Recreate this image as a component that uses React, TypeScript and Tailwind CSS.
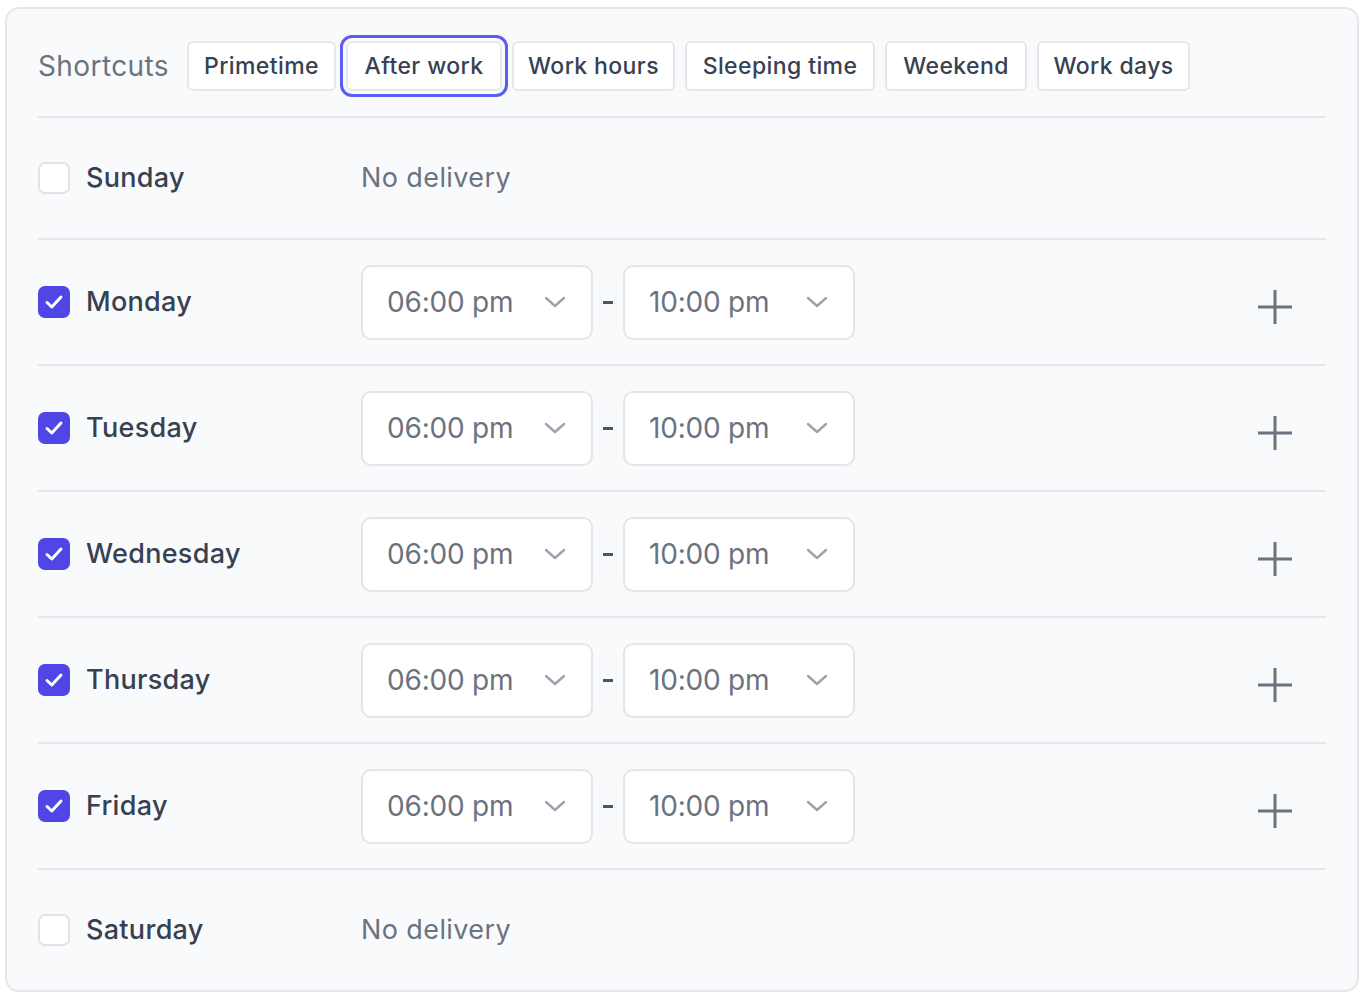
import React from "react";

const shortcuts: { label: string; w: string; active?: boolean }[] = [
  { label: "Primetime", w: "w-[149px]" },
  { label: "After work", w: "w-[156px]", active: true },
  { label: "Work hours", w: "w-[163px]" },
  { label: "Sleeping time", w: "w-[190px]" },
  { label: "Weekend", w: "w-[142px]" },
  { label: "Work days", w: "w-[153px]" },
];

const days: { name: string; on: boolean }[] = [
  { name: "Sunday", on: false },
  { name: "Monday", on: true },
  { name: "Tuesday", on: true },
  { name: "Wednesday", on: true },
  { name: "Thursday", on: true },
  { name: "Friday", on: true },
  { name: "Saturday", on: false },
];

function Checkbox({ on }: { on: boolean }) {
  if (on) {
    return (
      <div className="w-[32px] h-[32px] rounded-[7px] bg-[#4f46e5] flex items-center justify-center shrink-0">
        <svg width="32" height="32" viewBox="0 0 32 32" fill="none">
          <path d="M9 16.5 L13.8 21 L23 11" stroke="white" strokeWidth="3" strokeLinecap="round" strokeLinejoin="round" />
        </svg>
      </div>
    );
  }
  return <div className="w-[32px] h-[32px] rounded-[7px] bg-white border-2 border-[#e1e3e8] shrink-0" />;
}

function Chevron() {
  return (
    <svg width="22" height="12" viewBox="0 0 22 12" fill="none">
      <path d="M2 2 L11 10 L20 2" stroke="#9ca3af" strokeWidth="2.4" strokeLinecap="round" strokeLinejoin="round" />
    </svg>
  );
}

function TimeSelect({ value }: { value: string }) {
  return (
    <div className="w-[232px] h-[75px] rounded-[10px] border-2 border-[#e3e5e9] bg-white flex items-center justify-between pl-[24px] pr-[25px]">
      <span className="text-[28px] text-[#6b7280] tracking-[-0.2px]">{value}</span>
      <Chevron />
    </div>
  );
}

function PlusIcon() {
  return (
    <svg width="38" height="38" viewBox="0 0 38 38" fill="none">
      <path d="M19 2 V36 M2 19 H36" stroke="#6b7280" strokeWidth="3" />
    </svg>
  );
}

export default function App() {
  return (
    <div className="min-h-screen bg-white pl-[5px] pt-[7px] font-['Inter',sans-serif]">
      <div className="w-[1354px] rounded-[14px] border-2 border-[#e5e7eb] bg-[#f9fafb] px-[31px] pt-[32px]">
        <div className="flex items-center h-[50px]">
          <span className="w-[149px] shrink-0 text-[28px] tracking-[0.4px] text-[#6b7280]">Shortcuts</span>
          <div className="flex gap-[10px]">
            {shortcuts.map((s) => (
              <button
                key={s.label}
                className={`${s.w} h-[50px] rounded-[6px] border-2 border-[#e5e7eb] bg-white text-[23px] tracking-[0.4px] font-medium text-[#374151] flex items-center justify-center ${
                  s.active ? "outline-[3.5px] outline-offset-[3px] outline-[#5b5cf0]" : ""
                }`}
              >
                {s.label}
              </button>
            ))}
          </div>
        </div>
        <div className="mt-[25px]">
          {days.map((d) => (
            <div
              key={d.name}
              className={`flex items-center border-t-2 border-[#e5e7eb] ${d.on ? "h-[126px]" : "h-[122px]"}`}
            >
              <div className="w-[323px] flex items-center gap-[16px]">
                <Checkbox on={d.on} />
                <span className="text-[27px] tracking-[0.3px] font-medium text-[#374151]">{d.name}</span>
              </div>
              {d.on ? (
                <>
                  <TimeSelect value="06:00 pm" />
                  <div className="w-[30px] flex justify-center">
                    <div className="w-[10px] h-[3px] bg-[#4b5563]" />
                  </div>
                  <TimeSelect value="10:00 pm" />
                  <div className="flex-1" />
                  <div className="mr-[32px] mt-[10px]">
                    <PlusIcon />
                  </div>
                </>
              ) : (
                <span className="text-[27px] tracking-[0.4px] text-[#6b7280]">No delivery</span>
              )}
            </div>
          ))}
        </div>
      </div>
    </div>
  );
}
